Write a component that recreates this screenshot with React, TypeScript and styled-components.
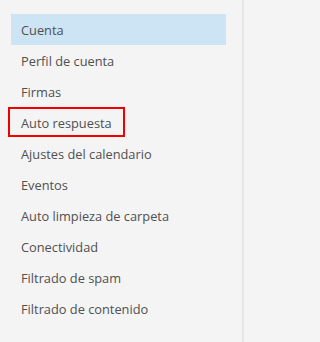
import React from 'react';
import styled, { createGlobalStyle } from 'styled-components';

const items = [
  'Cuenta',
  'Perfil de cuenta',
  'Firmas',
  'Auto respuesta',
  'Ajustes del calendario',
  'Eventos',
  'Auto limpieza de carpeta',
  'Conectividad',
  'Filtrado de spam',
  'Filtrado de contenido',
];

const GlobalStyle = createGlobalStyle`
  html, body {
    margin: 0;
    padding: 0;
    background: #f4f4f4;
  }
`;

const Sidebar = styled.nav`
  box-sizing: border-box;
  width: 244px;
  height: 342px;
  padding: 14px 16px 0 11px;
  background: #f4f4f4;
  border-right: 2px solid #e6e6e6;
  font-family: 'Open Sans', 'Noto Sans', sans-serif;
`;

const List = styled.ul`
  list-style: none;
  margin: 0;
  padding: 0;
  display: flex;
  flex-direction: column;
`;

const Item = styled.li<{ $active?: boolean; $marked?: boolean }>`
  position: relative;
  height: 31px;
  display: flex;
  align-items: center;
  padding-left: 10px;
  font-size: 12.8px;
  color: #505050;
  background: ${(p) => (p.$active ? '#cce4f3' : 'transparent')};
  cursor: pointer;

  &::after {
    content: '';
    display: ${(p) => (p.$marked ? 'block' : 'none')};
    position: absolute;
    left: -3px;
    top: 0;
    width: 117px;
    height: 30px;
    box-sizing: border-box;
    border: 2px solid #f00000;
  }
`;

function App() {
  return (
    <>
      <GlobalStyle />
      <Sidebar>
        <List>
          {items.map((label, i) => (
            <Item key={label} $active={i === 0} $marked={label === 'Auto respuesta'}>
              {label}
            </Item>
          ))}
        </List>
      </Sidebar>
    </>
  );
}

export default App;
